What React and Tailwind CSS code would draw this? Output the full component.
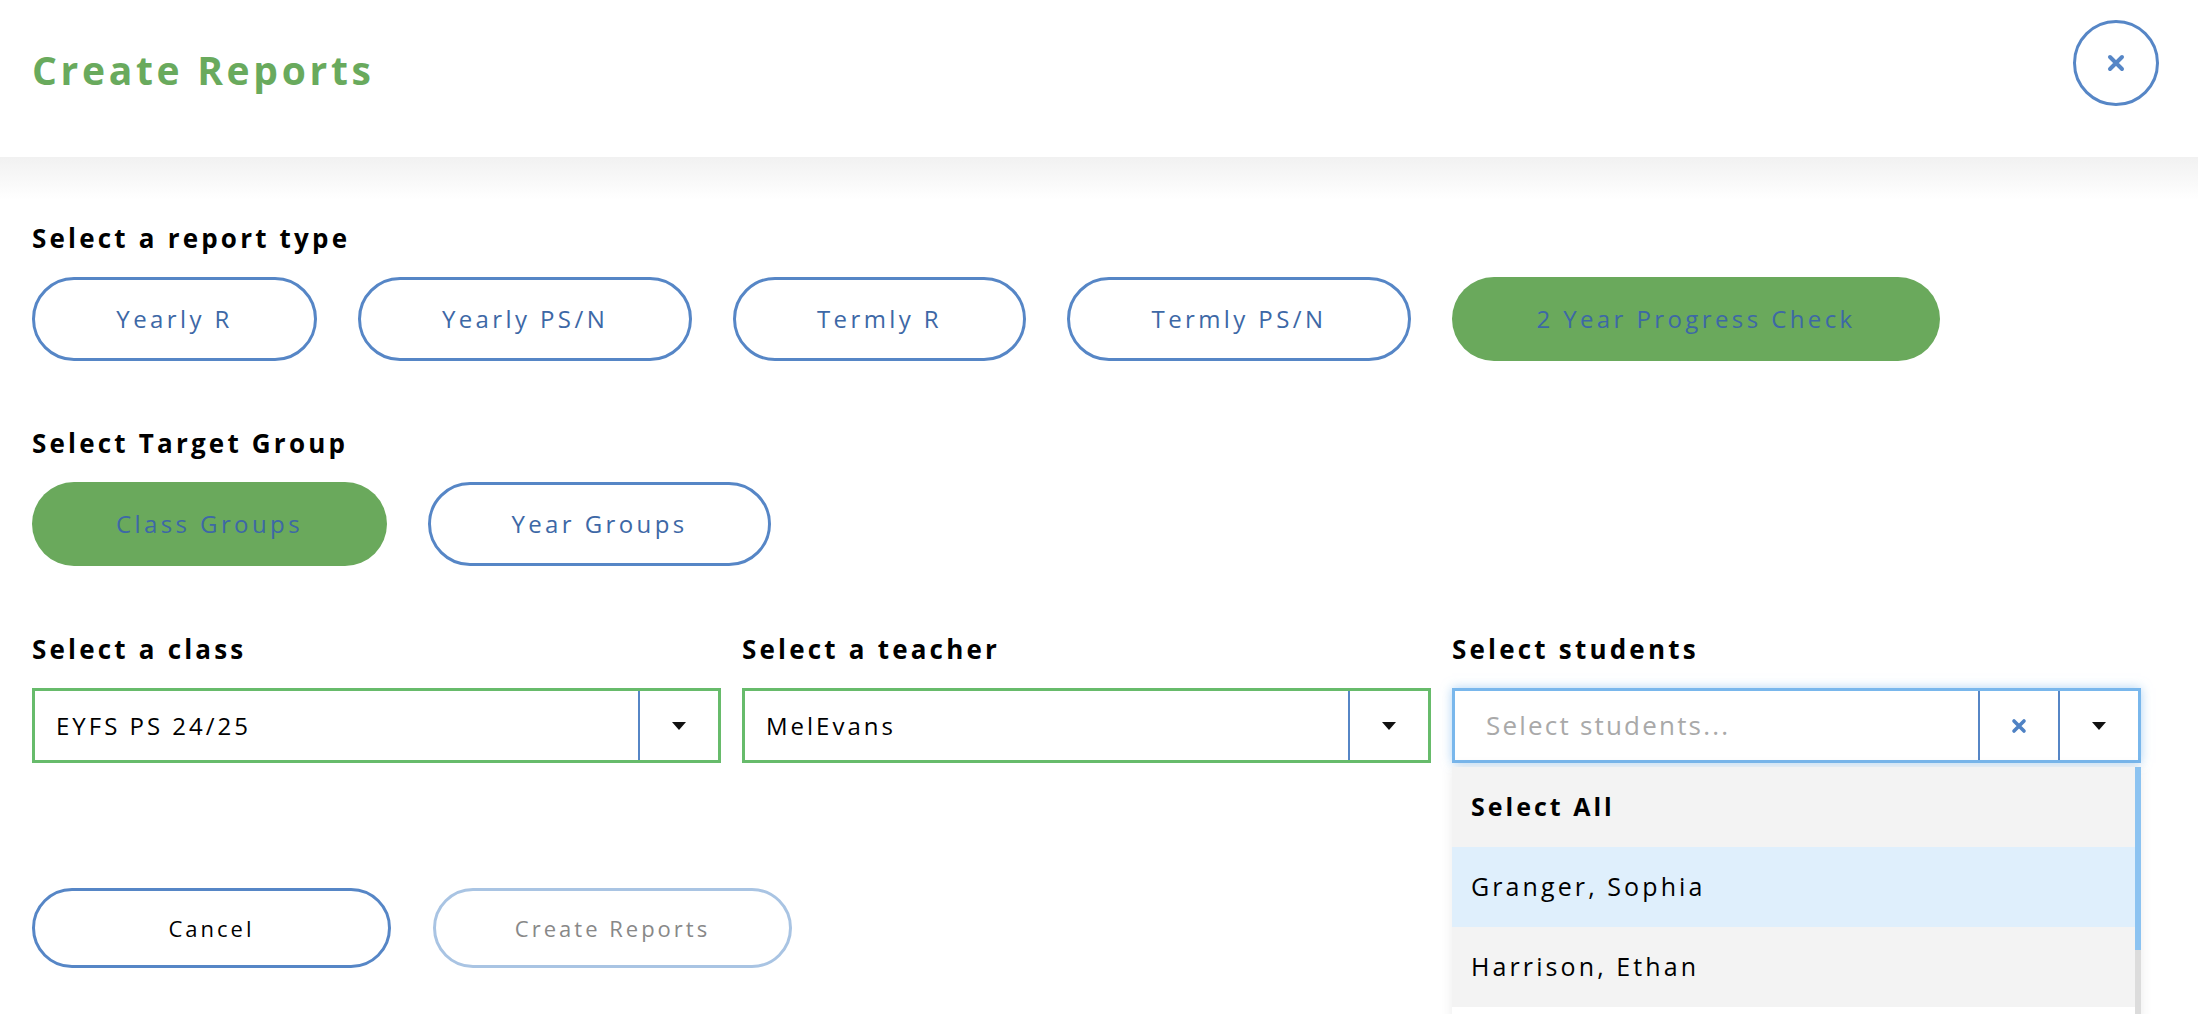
const font = { fontFamily: '"Open Sans", "Noto Sans", sans-serif' };

const reportTypes = [
  { label: "Yearly R", w: "w-[285px]" },
  { label: "Yearly PS/N", w: "w-[334px]" },
  { label: "Termly R", w: "w-[293px]" },
  { label: "Termly PS/N", w: "w-[344px]" },
  { label: "2 Year Progress Check", w: "w-[488px]", active: true },
];

const groups = [
  { label: "Class Groups", w: "w-[355px]", active: true },
  { label: "Year Groups", w: "w-[343px]" },
];

function Pill({ label, w, active }) {
  return (
    <button
      className={
        "h-[84px] rounded-full text-[24px] font-medium tracking-[3.4px] text-[#3d68a6] " +
        w +
        (active ? " bg-[#6aa95c]" : " border-[3px] border-[#5686c6] bg-white")
      }
    >
      {label}
    </button>
  );
}

function Label({ children }) {
  return (
    <div className="text-[26px] font-bold leading-[32px] tracking-[3.2px] text-black">
      {children}
    </div>
  );
}

function Caret() {
  return (
    <svg width="14" height="8" viewBox="0 0 14 8">
      <path d="M0 0 L14 0 L7 8 Z" fill="#111" />
    </svg>
  );
}

function Select({ value }) {
  return (
    <div className="flex h-[75px] border-[3px] border-[#67bb6b] bg-white">
      <div className="flex flex-1 items-center pl-[21px] text-[24px] tracking-[3px] text-black">
        {value}
      </div>
      <div className="flex w-[80px] items-center justify-center border-l-[2px] border-[#5686c6]">
        <Caret />
      </div>
    </div>
  );
}

function StudentSelect() {
  const rows = [
    { name: "Select All", bold: true, bg: "bg-[#f3f3f3]" },
    { name: "Granger, Sophia", bg: "bg-[#dfeffc]" },
    { name: "Harrison, Ethan", bg: "bg-[#f3f3f3]" },
  ];
  return (
    <div className="relative">
      <div className="flex h-[75px] border-[3px] border-[#79b7ec] bg-white shadow-[0_0_10px_rgba(122,183,236,0.6)]">
        <div className="flex flex-1 items-center pl-[31px] text-[26px] tracking-[2.2px] text-[#a9a9a9]">
          Select students...
        </div>
        <div className="flex w-[80px] items-center justify-center border-l-[2px] border-[#5686c6]">
          <svg width="16" height="16" viewBox="0 0 16 16">
            <path d="M3 3 L13 13 M13 3 L3 13" stroke="#4f82c4" strokeWidth="3.6" strokeLinecap="round" />
          </svg>
        </div>
        <div className="flex w-[80px] items-center justify-center border-l-[2px] border-[#5686c6]">
          <Caret />
        </div>
      </div>
      <div className="absolute left-0 right-0 top-[79px] flex bg-white shadow-[0_0_12px_rgba(0,0,0,0.08)]">
        <div className="flex-1">
          {rows.map((r) => (
            <div
              key={r.name}
              className={
                "flex h-[80px] items-center pl-[19px] text-[25px] text-black " +
                r.bg +
                (r.bold ? " font-bold tracking-[3px]" : " font-medium tracking-[3.1px]")
              }
            >
              {r.name}
            </div>
          ))}
          <div className="h-[20px] bg-white" />
        </div>
        <div className="flex w-[6px] flex-col">
          <div className="h-[183px] bg-[#8cc3f1]" />
          <div className="flex-1 bg-[#dcdcdc]" />
        </div>
      </div>
    </div>
  );
}

export default function App() {
  return (
    <div className="h-[1014px] w-[2198px] overflow-hidden bg-white" style={font}>
      <header className="flex h-[157px] items-start justify-between pl-[32px] pr-[39px]">
        <h1 className="mt-[47px] text-[39px] font-bold leading-[46px] tracking-[3.7px] text-[#69aa5d]">
          Create Reports
        </h1>
        <button className="mt-[20px] flex h-[86px] w-[86px] items-center justify-center rounded-full border-[3px] border-[#5686c6] bg-white">
          <svg width="20" height="20" viewBox="0 0 20 20">
            <path d="M4 4 L16 16 M16 4 L4 16" stroke="#5686c6" strokeWidth="4" strokeLinecap="round" />
          </svg>
        </button>
      </header>
      <div className="h-[43px] bg-gradient-to-b from-[#f1f1f1] to-white" />

      <main className="px-[32px]">
        <div className="mt-[22px]">
          <Label>Select a report type</Label>
        </div>
        <div className="mt-[23px] flex gap-[41px]">
          {reportTypes.map((t) => (
            <Pill key={t.label} {...t} />
          ))}
        </div>

        <div className="mt-[66px]">
          <Label>Select Target Group</Label>
        </div>
        <div className="mt-[23px] flex gap-[41px]">
          {groups.map((g) => (
            <Pill key={g.label} {...g} />
          ))}
        </div>

        <div className="mt-[67px] grid w-[2109px] grid-cols-3 gap-x-[21px]">
          <div>
            <Label>Select a class</Label>
            <div className="mt-[23px]">
              <Select value="EYFS PS 24/25" />
            </div>
          </div>
          <div>
            <Label>Select a teacher</Label>
            <div className="mt-[23px]">
              <Select value="MelEvans" />
            </div>
          </div>
          <div>
            <Label>Select students</Label>
            <div className="mt-[23px]">
              <StudentSelect />
            </div>
          </div>
        </div>

        <div className="mt-[125px] flex gap-[42px]">
          <button className="h-[80px] w-[359px] rounded-full border-[3px] border-[#5686c6] bg-white text-[22px] font-medium tracking-[3px] text-black">
            Cancel
          </button>
          <button className="h-[80px] w-[359px] rounded-full border-[3px] border-[#a9c4e3] bg-white text-[22px] font-medium tracking-[3px] text-[#888]">
            Create Reports
          </button>
        </div>
      </main>
    </div>
  );
}
